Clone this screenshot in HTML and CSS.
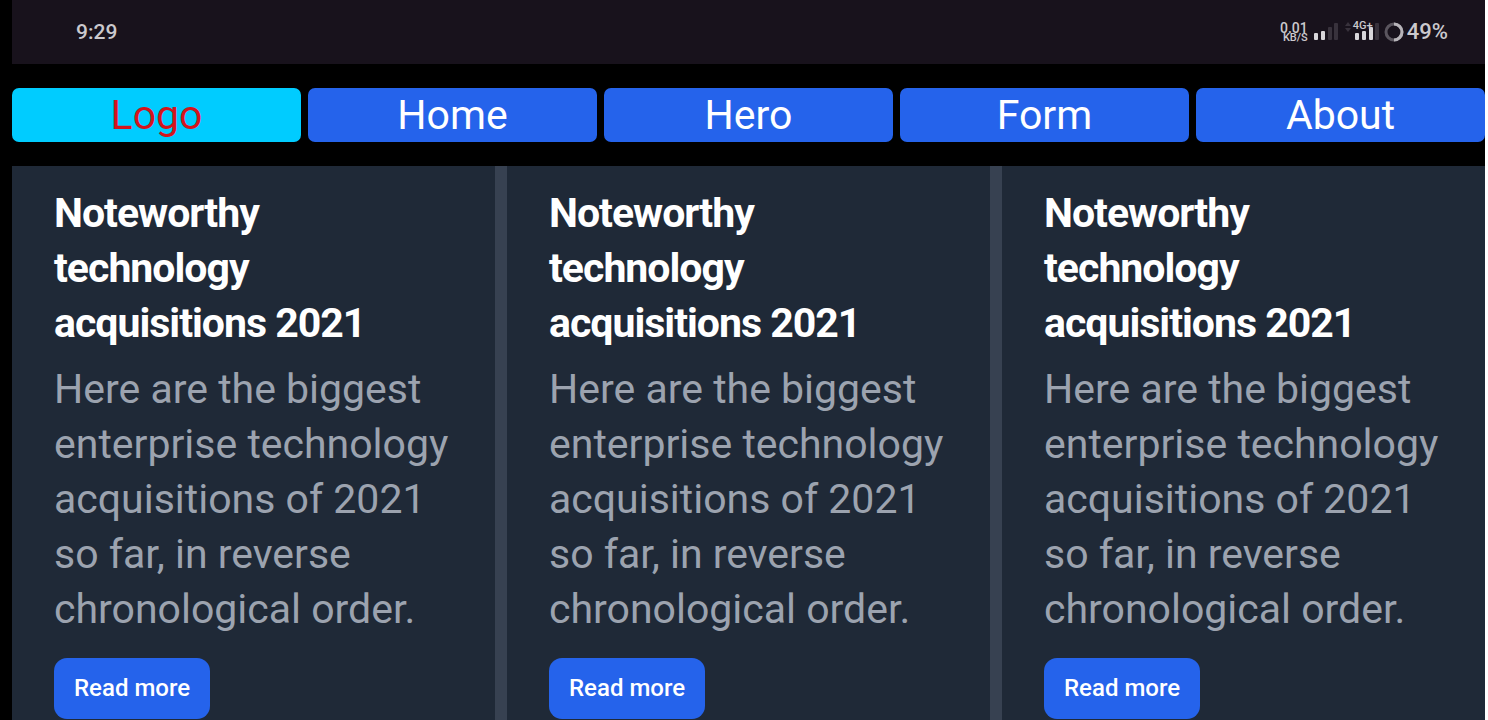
FILE: index.html
```html
<!DOCTYPE html>
<html lang="en">
<head>
<meta charset="utf-8">
<title>Noteworthy technology</title>
<link rel="stylesheet" href="styles.css">
</head>
<body>
<div class="screen">
  <header class="status">
    <time>9:29</time>
    <div class="indicators">
      <div class="speed"><span>0.01</span><small>KB/S</small></div>
      <svg class="signal" width="25" height="20" viewBox="0 0 25 20" aria-hidden="true">
        <g class="on"><rect x="0" y="11" width="4" height="7" rx="1"/><rect x="7" y="9" width="4" height="9" rx="1"/></g>
        <g class="off"><rect x="14" y="5" width="4" height="13" rx="1"/><rect x="20" y="1" width="4" height="17" rx="1"/></g>
      </svg>
      <div class="mobile">
        <svg class="signal" width="36" height="20" viewBox="0 0 36 20" aria-hidden="true">
          <path class="off" d="M0 4L3 0l3 4zM0 6l3 4 3-4z"/>
          <rect class="off" x="30" y="1" width="4" height="17" rx="1"/>
          <g class="on"><rect x="10" y="11" width="4" height="7" rx="1"/><rect x="17" y="9" width="4" height="9" rx="1"/><rect x="24" y="5" width="4" height="13" rx="1"/></g>
        </svg>
        <span class="network">4G+</span>
      </div>
      <svg class="battery" width="20" height="20" viewBox="0 0 20 20" aria-hidden="true">
        <circle class="ring" cx="10" cy="10" r="8"/>
        <path class="charge" d="M10 2a8 8 0 0 1 0 16"/>
      </svg>
      <span class="level">49%</span>
    </div>
  </header>
  <nav class="nav">
    <a class="link logo" href="#">Logo</a>
    <a class="link" href="#home">Home</a>
    <a class="link" href="#hero">Hero</a>
    <a class="link" href="#form">Form</a>
    <a class="link" href="#about">About</a>
  </nav>
  <main class="cards">
    <article class="card">
      <h2 class="title">Noteworthy technology acquisitions 2021</h2>
      <p class="text">Here are the biggest enterprise technology acquisitions of 2021 so far, in reverse chronological order.</p>
      <a class="more" href="#one">Read more</a>
    </article>
    <article class="card">
      <h2 class="title">Noteworthy technology acquisitions 2021</h2>
      <p class="text">Here are the biggest enterprise technology acquisitions of 2021 so far, in reverse chronological order.</p>
      <a class="more" href="#two">Read more</a>
    </article>
    <article class="card">
      <h2 class="title">Noteworthy technology acquisitions 2021</h2>
      <p class="text">Here are the biggest enterprise technology acquisitions of 2021 so far, in reverse chronological order.</p>
      <a class="more" href="#three">Read more</a>
    </article>
  </main>
</div>
</body>
</html>
```
FILE: styles.css
```css
* { box-sizing: border-box; }
body {
  margin: 0;
  background: #fff;
  font-family: Roboto, "Liberation Sans", sans-serif;
}
.screen {
  display: flex;
  flex-direction: column;
  min-height: 100vh;
  margin-right: 3px;
  padding-left: 12px;
  background: #000;
}
.status {
  display: flex;
  align-items: center;
  justify-content: space-between;
  height: 64px;
  padding: 0 37px 0 64px;
  background: #18121c;
  color: #cbc9cd;
  font-size: 21px;
  font-weight: 500;
  line-height: 24px;
}
.indicators { display: flex; align-items: center; }
.speed {
  display: flex;
  flex-direction: column;
  align-items: flex-end;
  margin-right: 6px;
  font-size: 14px;
  line-height: 12px;
}
.speed small { font-size: 11px; line-height: 8px; }
.signal { display: block; }
.on { fill: #d8d6da; }
.off { fill: #38323c; }
.mobile { position: relative; margin: 0 3px 0 6px; }
.network {
  position: absolute;
  top: -2px;
  left: 8px;
  font-size: 11px;
  line-height: 12px;
}
.battery { margin-right: 3px; fill: none; stroke-width: 3; }
.ring { stroke: #5a555e; }
.charge { stroke: #b7b4b9; }
.level { font-size: 22px; }
.nav {
  display: grid;
  grid-template-columns: repeat(5, 1fr);
  gap: 7px;
  padding: 24px 0;
}
.link {
  border-radius: 7px;
  background: #2563eb;
  color: #fff;
  font-size: 41px;
  line-height: 54px;
  text-align: center;
  text-decoration: none;
}
.logo { background: #00ccff; color: #d4141c; }
.cards {
  display: grid;
  flex: 1;
  grid-template-columns: repeat(3, 1fr);
  gap: 12px;
  background: #374151;
}
.card { padding: 20px 36px 1px 42px; background: #1f2937; }
.title {
  margin: 0 0 11px;
  color: #fff;
  font-size: 41px;
  font-weight: 700;
  line-height: 55px;
  letter-spacing: -1px;
}
.text {
  margin: 0 0 21px;
  color: #9ca3af;
  font-size: 41px;
  line-height: 55px;
}
.more {
  display: inline-block;
  padding: 15px 20px;
  border-radius: 13px;
  background: #2563eb;
  color: #fff;
  font-size: 24px;
  font-weight: 500;
  line-height: 31px;
  text-decoration: none;
  vertical-align: top;
}
```
